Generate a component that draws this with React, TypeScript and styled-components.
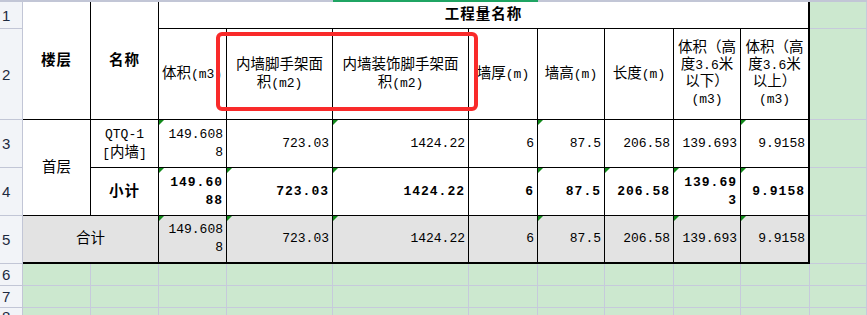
import React from 'react'
import styled, { createGlobalStyle } from 'styled-components'

type Align = 'left' | 'center' | 'right'

interface CellProps {
  $c: string;
  $r: string;
  $align?: Align;
  $bold?: boolean;
  $grey?: boolean;
  $thickRight?: boolean;
  $thickBottom?: boolean;
  $lh?: number;
}

const GlobalStyle = createGlobalStyle`
  html, body {
    margin: 0;
    padding: 0;
    background: #ffffff;
  }
`

const Sheet = styled.div`
  position: relative;
  display: grid;
  grid-template-columns: 23px 68px 68px 68px 106px 136px 69px 67px 69px 67px 69px 1fr;
  grid-template-rows: 2px 27px 91px 48px 48px 48px 22px 22px 1fr;
  width: 867px;
  height: 315px;
  overflow: hidden;
  background: #cce8cf;
  font-family: "Liberation Mono", "Noto Sans CJK SC", monospace;
  font-size: 14.5px;
  color: #000000;
`

const EdgeBar = styled.div<{ $c: string; $active?: boolean }>`
  grid-column: ${p => p.$c};
  grid-row: 1;
  background: ${p => (p.$active ? '#1fa463' : '#c2c6d6')};
`

const RowHead = styled.div<{ $r: number }>`
  grid-column: 1;
  grid-row: ${p => p.$r};
  display: flex;
  align-items: center;
  padding-left: 2px;
  box-sizing: border-box;
  background: #f2f4f8;
  border-right: 1px solid #c2c6d6;
  border-bottom: 1px solid #c2c6d6;
  font-family: "Liberation Sans", Arial, sans-serif;
  font-size: 15px;
  color: #1d2a40;
`

const Blank = styled.div<{ $c: number; $r: number }>`
  grid-column: ${p => p.$c};
  grid-row: ${p => p.$r};
  box-sizing: border-box;
  border-right: 1px solid #c6cadb;
  border-bottom: 1px solid #c6cadb;
`

const Cell = styled.div<CellProps>`
  position: relative;
  grid-column: ${p => p.$c};
  grid-row: ${p => p.$r};
  display: flex;
  align-items: center;
  justify-content: ${p => (p.$align === 'left' ? 'flex-start' : p.$align === 'right' ? 'flex-end' : 'center')};
  text-align: ${p => p.$align ?? 'center'};
  box-sizing: border-box;
  padding: 0 3px;
  overflow: hidden;
  white-space: nowrap;
  background: ${p => (p.$grey ? '#e3e3e3' : '#ffffff')};
  border-right: ${p => (p.$thickRight ? '2px' : '1px')} solid #000000;
  border-bottom: ${p => (p.$thickBottom ? '2px' : '1px')} solid #000000;
  line-height: ${p => p.$lh ?? 18}px;
  font-weight: ${p => (p.$bold ? 700 : 400)};
  letter-spacing: ${p => (p.$bold ? '1px' : '0')};
`

const Num = styled.span`
  font-family: "Liberation Mono", monospace;
  font-size: 13px;
`

const Flag = styled.span`
  position: absolute;
  top: 0;
  left: 0;
  width: 0;
  height: 0;
  border-top: 5px solid #11891a;
  border-right: 5px solid transparent;
`

const RedMark = styled.div`
  position: absolute;
  left: 216px;
  top: 32px;
  width: 262px;
  height: 79px;
  box-sizing: border-box;
  border: 4px solid #f92a2a;
  border-radius: 6px;
  pointer-events: none;
`

// values for columns C..J (grid columns 4..11)
const detail = [['149.608', '8'], ['723.03'], ['1424.22'], ['6'], ['87.5'], ['206.58'], ['139.693'], ['9.9158']]
const subtotal = [['149.60', '88'], ['723.03'], ['1424.22'], ['6'], ['87.5'], ['206.58'], ['139.69', '3'], ['9.9158']]

const rows = [
  { r: 4, values: detail, flags: [4, 6, 8, 11], bold: false, grey: false },
  { r: 5, values: subtotal, flags: [4, 5, 6, 8, 9, 10, 11], bold: true, grey: false },
  { r: 6, values: detail, flags: [4, 5, 6, 8, 10, 11], bold: false, grey: true },
]

const App = () => (
  <Sheet>
    <GlobalStyle />
    <EdgeBar $c="1 / 6" />
    <EdgeBar $c="6 / 8" $active />
    <EdgeBar $c="8 / -1" />

    {[1, 2, 3, 4, 5, 6, 7, 8].map(n => (
      <RowHead key={n} $r={n + 1}>{n}</RowHead>
    ))}

    <Cell $c="2" $r="2 / 4" $bold>楼层</Cell>
    <Cell $c="3" $r="2 / 4" $bold>名称</Cell>
    <Cell $c="4 / 12" $r="2" $bold $thickRight>工程量名称</Cell>

    <Cell $c="4" $r="3" $align="left">
      <span>体积<Num>(m3)</Num></span>
    </Cell>
    <Cell $c="5" $r="3">
      <div>内墙脚手架面<br />积<Num>(m2)</Num></div>
    </Cell>
    <Cell $c="6" $r="3">
      <div>内墙装饰脚手架面<br />积<Num>(m2)</Num></div>
    </Cell>
    <Cell $c="7" $r="3"><span>墙厚<Num>(m)</Num></span></Cell>
    <Cell $c="8" $r="3"><span>墙高<Num>(m)</Num></span></Cell>
    <Cell $c="9" $r="3"><span>长度<Num>(m)</Num></span></Cell>
    <Cell $c="10" $r="3" $lh={17}>
      <div>体积（高<br />度<Num>3.6</Num>米<br />以下）<br /><Num>(m3)</Num></div>
    </Cell>
    <Cell $c="11" $r="3" $lh={17} $thickRight>
      <div>体积（高<br />度<Num>3.6</Num>米<br />以上）<br /><Num>(m3)</Num></div>
    </Cell>

    <Cell $c="2" $r="4 / 6">首层</Cell>
    <Cell $c="3" $r="4">
      <div><Num>QTQ-1</Num><br /><Num>[</Num>内墙<Num>]</Num></div>
    </Cell>
    <Cell $c="3" $r="5" $bold>小计</Cell>
    <Cell $c="2 / 4" $r="6" $grey $thickBottom>合计</Cell>

    {rows.map(row =>
      row.values.map((lines, i) => {
        const col = i + 4
        return (
          <Cell
            key={`${row.r}-${col}`}
            $c={String(col)}
            $r={String(row.r)}
            $align="right"
            $bold={row.bold}
            $grey={row.grey}
            $thickBottom={row.r === 6}
            $thickRight={col === 11}
          >
            {row.flags.includes(col) && <Flag />}
            <Num>
              {lines.map((l, k) => (
                <React.Fragment key={k}>
                  {k > 0 && <br />}
                  {l}
                </React.Fragment>
              ))}
            </Num>
          </Cell>
        )
      })
    )}

    {[2, 3, 4, 5, 6].map(r => (
      <Blank key={`k-${r}`} $c={12} $r={r} />
    ))}
    {[7, 8, 9].map(r =>
      [2, 3, 4, 5, 6, 7, 8, 9, 10, 11, 12].map(c => (
        <Blank key={`${r}-${c}`} $c={c} $r={r} />
      ))
    )}

    <RedMark />
  </Sheet>
)

export default App
